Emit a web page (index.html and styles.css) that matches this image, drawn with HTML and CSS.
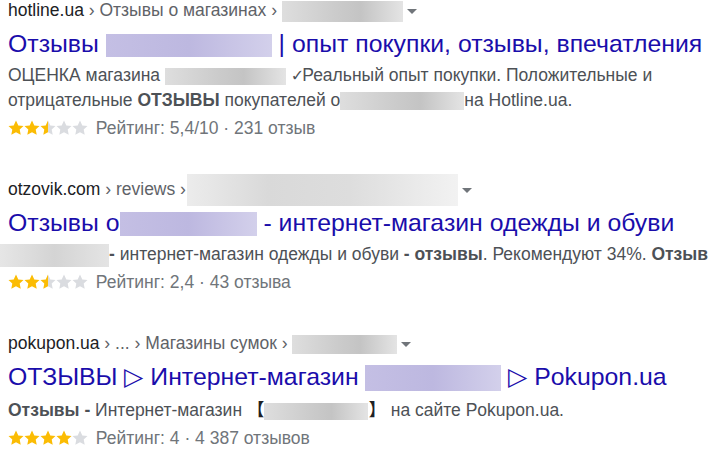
FILE: index.html
```html
<!DOCTYPE html>
<html lang="ru">

<head>
    <title>Отзывы</title>
    <meta charset="utf-8">
    <meta name="viewport" content="width=device-width, initial-scale=1">
    <link rel="stylesheet" href="styles.css">
</head>

<body>
    <svg class="defs" width="0" height="0">
        <defs>
            <path id="star" d="M8 .6l2.3 4.8 5.2.6-3.8 3.6 1 5.2L8 12.3l-4.7 2.5 1-5.2L.5 6l5.2-.6z" />
            <linearGradient id="half">
                <stop offset="50%" stop-color="#fbbc04" />
                <stop offset="50%" stop-color="#dadce0" />
            </linearGradient>
        </defs>
    </svg>

    <div class="result">
        <div class="crumb">
            <span class="site">hotline.ua</span> › Отзывы о магазинах ›
            <span class="blur blur-grey crumb-box-1"></span><span class="caret"></span>
        </div>
        <div class="title">
            Отзывы <span class="blur blur-violet title-box-1"></span> | опыт покупки, отзывы, впечатления
        </div>
        <div class="snippet">
            ОЦЕНКА магазина <span class="blur blur-grey snip-box-1"></span> <span class="check">✓</span>Реальный опыт покупки. Положительные и<br>
            отрицательные <b>ОТЗЫВЫ</b> покупателей о<span class="blur blur-grey snip-box-2"></span>на Hotline.ua.
        </div>
        <div class="rating">
            <svg class="stars" width="80" height="16" viewBox="0 0 80 16">
                <use href="#star" class="on" />
                <use href="#star" x="16" class="on" />
                <use href="#star" x="32" fill="url(#half)" />
                <use href="#star" x="48" class="off" />
                <use href="#star" x="64" class="off" />
            </svg>
            Рейтинг: 5,4/10 · 231 отзыв
        </div>
    </div>

    <div class="result">
        <div class="crumb">
            <span class="site">otzovik.com</span> › reviews ›
            <span class="blur blur-grey crumb-box-2"></span><span class="caret"></span>
        </div>
        <div class="title">
            Отзывы о<span class="blur blur-violet title-box-2"></span> - интернет-магазин одежды и обуви
        </div>
        <div class="snippet">
            <span class="blur blur-grey snip-box-3"></span><b>-</b> интернет-магазин одежды и обуви <b>- отзывы</b>. Рекомендуют 34%. <b>Отзыв</b>
        </div>
        <div class="rating">
            <svg class="stars" width="80" height="16" viewBox="0 0 80 16">
                <use href="#star" class="on" />
                <use href="#star" x="16" class="on" />
                <use href="#star" x="32" fill="url(#half)" />
                <use href="#star" x="48" class="off" />
                <use href="#star" x="64" class="off" />
            </svg>
            Рейтинг: 2,4 · 43 отзыва
        </div>
    </div>

    <div class="result">
        <div class="crumb">
            <span class="site">pokupon.ua</span> › ... › Магазины сумок ›
            <span class="blur blur-grey crumb-box-3"></span><span class="caret"></span>
        </div>
        <div class="title">
            ОТЗЫВЫ ▷ Интернет-магазин <span class="blur blur-violet title-box-3"></span> ▷ Pokupon.ua
        </div>
        <div class="snippet">
            <b>Отзывы -</b> Интернет-магазин <span class="cjk">【</span><span class="blur blur-grey snip-box-4"></span><span class="cjk">】</span> на сайте Pokupon.ua.
        </div>
        <div class="rating">
            <svg class="stars" width="80" height="16" viewBox="0 0 80 16">
                <use href="#star" class="on" />
                <use href="#star" x="16" class="on" />
                <use href="#star" x="32" class="on" />
                <use href="#star" x="48" class="on" />
                <use href="#star" x="64" class="off" />
            </svg>
            Рейтинг: 4 · 4 387 отзывов
        </div>
    </div>
</body>

</html>
```

FILE: styles.css
```css
* {
    box-sizing: border-box;
}

body {
    margin: 0;
    padding: 0 8px;
    font-family: "Liberation Sans", Arial, sans-serif;
    background: white;
    overflow: hidden;
}

.defs {
    position: absolute;
}

/* One search result */
.result {
    margin-bottom: 38px;
}

/* Breadcrumb line */
.crumb {
    height: 20px;
    line-height: 20px;
    font-size: 17.5px;
    color: #5f6368;
    white-space: nowrap;
}

.site {
    color: #202124;
}

.caret {
    display: inline-block;
    width: 0;
    height: 0;
    margin-left: 4px;
    vertical-align: middle;
    border-left: 5px solid transparent;
    border-right: 5px solid transparent;
    border-top: 5px solid #70757a;
}

/* Title link */
.title {
    margin-top: 9px;
    height: 30px;
    line-height: 30px;
    font-size: 24.8px;
    color: #1a0dab;
    white-space: nowrap;
}

/* Description text */
.snippet {
    margin-top: 4px;
    line-height: 25px;
    font-size: 17.5px;
    color: #4d5156;
    white-space: nowrap;
}

.snippet b {
    color: #4d5156;
}

.check {
    font-family: "DejaVu Sans", sans-serif;
    font-size: 16px;
    letter-spacing: -2px;
}

.cjk {
    font-family: "Noto Sans CJK SC", "DejaVu Sans", sans-serif;
    color: #202124;
}

/* Stars and score */
.rating {
    margin-top: 2px;
    height: 26px;
    line-height: 26px;
    font-size: 17.5px;
    color: #70757a;
    white-space: nowrap;
}

.stars {
    vertical-align: -2px;
    margin-right: 3px;
}

.stars .on {
    fill: #fbbc04;
}

.stars .off {
    fill: #dadce0;
}

/* Hidden names */
.blur {
    display: inline-block;
    vertical-align: middle;
    margin-top: -20px;
    margin-bottom: -20px;
}

.blur-grey {
    background: linear-gradient(90deg, #dedede, #cbcbcb 45%, #c4c4c4 65%, #e4e4e4);
}

.blur-violet {
    background: linear-gradient(90deg, #c4bfe4, #bdb8e0 50%, #d3d0eb);
}

.crumb-box-1 {
    width: 121px;
    height: 21px;
}

.crumb-box-2 {
    width: 271px;
    height: 32px;
    margin-left: -4px;
    background: linear-gradient(90deg, #ececec, #d9d9d9 30%, #dddddd 60%, #f2f2f2);
}

.crumb-box-3 {
    width: 105px;
    height: 19px;
}

.title-box-1 {
    width: 166px;
    height: 23px;
}

.title-box-2 {
    width: 137px;
    height: 24px;
}

.title-box-3 {
    width: 136px;
    height: 26px;
}

.snip-box-1 {
    width: 121px;
    height: 17px;
}

.snip-box-2 {
    width: 124px;
    height: 18px;
}

.snip-box-3 {
    width: 109px;
    height: 23px;
    margin-left: -8px;
    background: linear-gradient(90deg, #e6e6e6, #d4d4d4 50%, #e4e4e4);
}

.snip-box-4 {
    width: 104px;
    height: 17px;
}
```
